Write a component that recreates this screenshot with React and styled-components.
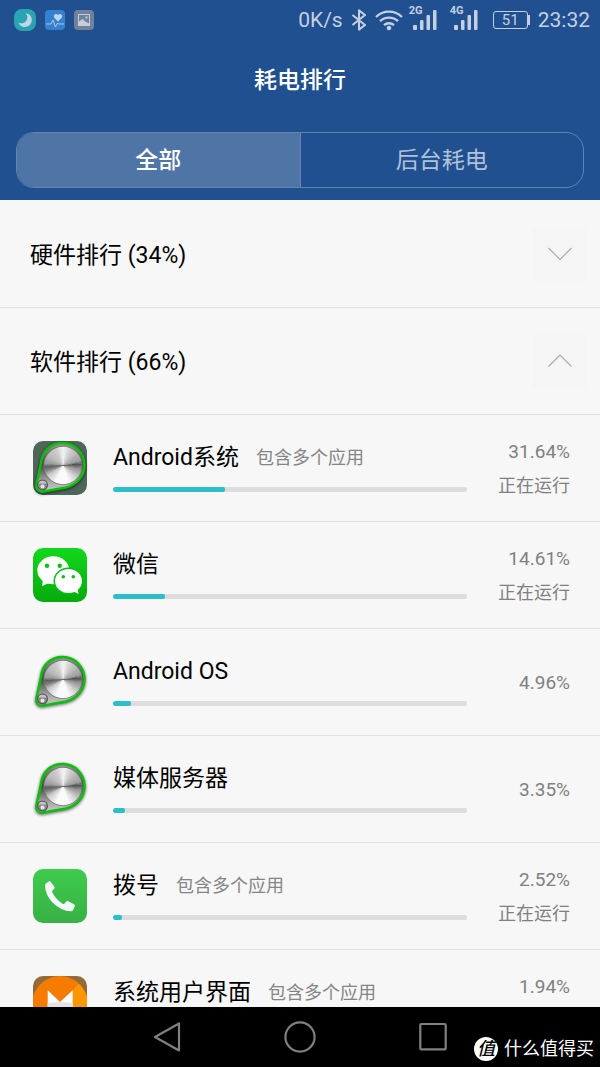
import React, { useState } from 'react';
import styled, { createGlobalStyle } from 'styled-components';

const GlobalStyle = createGlobalStyle`
  * {
    box-sizing: border-box;
  }
  body {
    margin: 0;
    background: #f7f7f7;
    font-family: Roboto, 'Noto Sans CJK SC', sans-serif;
  }
  button {
    font-family: inherit;
    border: none;
    padding: 0;
    background: none;
    cursor: pointer;
  }
`;

const Screen = styled.div`
  display: flex;
  flex-direction: column;
  height: 100vh;
  overflow: hidden;
`;

const Header = styled.header`
  flex: none;
  background: #20508f;
  padding-bottom: 12px;
`;

const StatusBar = styled.div`
  display: flex;
  align-items: center;
  justify-content: space-between;
  height: 40px;
  padding: 0 10px 0 14px;
  color: #c4d0e2;
  font-size: 21px;
  svg {
    display: block;
  }
`;

const StatusGroup = styled.div`
  display: flex;
  align-items: center;
  gap: ${(props) => props.$gap}px;
`;

const Title = styled.h1`
  margin: 0;
  height: 92px;
  padding-top: 21px;
  line-height: 40px;
  font-size: 23px;
  font-weight: 500;
  text-align: center;
  color: #fff;
`;

const Tabs = styled.div`
  display: flex;
  height: 56px;
  margin: 0 16px;
  border: 1px solid #6484b1;
  border-radius: 18px;
  overflow: hidden;
`;

const Tab = styled.button`
  flex: 1;
  && {
    padding-bottom: 4px;
  }
  font-size: 23px;
  font-weight: ${(props) => (props.$active ? 500 : 400)};
  color: ${(props) => (props.$active ? '#fff' : '#b0c1da')};
  background: ${(props) => (props.$active ? '#4f74a6' : 'transparent')};
  & + & {
    border-left: 1px solid #6484b1;
  }
`;

const List = styled.main`
  flex: 1;
  min-height: 0;
  overflow: hidden;
`;

const GroupRow = styled.button`
  display: flex;
  align-items: center;
  justify-content: space-between;
  width: 100%;
  height: 107px;
  && {
    padding: 0 14px 0 30px;
    border-top: 1px solid ${(props) => (props.$first ? 'transparent' : '#e2e2e2')};
  }
  font-size: 23px;
  color: #000;
`;

const GroupName = styled.span`
  padding-bottom: 2px;
`;

const ArrowBox = styled.span`
  display: flex;
  align-items: center;
  justify-content: center;
  width: 53px;
  height: 53px;
  background: #f5f5f5;
`;

const AppRow = styled.div`
  display: flex;
  align-items: center;
  height: 107px;
  padding: 0 30px 0 33px;
  border-top: 1px solid #e2e2e2;
  > svg {
    flex: none;
    overflow: visible;
  }
`;

const AppInfo = styled.div`
  flex: 1;
  margin-left: 26px;
  padding-bottom: 2px;
`;

const AppName = styled.div`
  display: flex;
  align-items: center;
  gap: 17px;
  height: 32px;
  line-height: 32px;
  margin-bottom: 13px;
  font-size: 23px;
  color: #000;
  white-space: nowrap;
`;

const AppNote = styled.span`
  font-size: 18px;
  color: #858585;
`;

const Track = styled.div`
  height: 5px;
  border-radius: 2px;
  background: #dddddd;
  overflow: hidden;
`;

const Fill = styled.div`
  height: 5px;
  border-radius: 2px;
  background: #2abfc9;
`;

const AppUsage = styled.div`
  width: 103px;
  padding-top: 2px;
  line-height: 34px;
  text-align: right;
  color: #808080;
`;

const AppPercent = styled.div`
  font-size: 19px;
`;

const AppStatus = styled.div`
  min-height: 34px;
  font-size: 18px;
`;

const NavBar = styled.nav`
  position: relative;
  flex: none;
  display: flex;
  align-items: center;
  justify-content: center;
  gap: 103px;
  height: 60px;
  background: #000;
  svg {
    display: block;
  }
`;

const Watermark = styled.div`
  position: absolute;
  right: 6px;
  bottom: 5px;
  display: flex;
  align-items: center;
  gap: 6px;
  line-height: 26px;
  font-size: 18px;
  color: #fff;
`;

const WatermarkBadge = styled.span`
  width: 24px;
  height: 24px;
  border-radius: 50%;
  background: #fff;
  color: #000;
  line-height: 23px;
  font-size: 18px;
  font-weight: 500;
  font-style: italic;
  text-align: center;
`;

const MoonIcon = () => (
  <svg width='22' height='22' viewBox='0 0 22 22'>
    <rect width='22' height='22' rx='8' fill='#2aa3b3' />
    <path
      d='M11.500 4A7 7 0 1 1 4.300 13.500A6 6 0 0 0 11.500 4z'
      fill='#c3d5e3'
    />
  </svg>
);

const HealthIcon = () => (
  <svg width='20' height='20' viewBox='0 0 20 20'>
    <rect width='20' height='20' rx='4' fill='#3580cf' />
    <path
      d='M13 11.500L9.500 8C7.500 5 11 2.500 13 5c2-2.500 5.500 0 3.500 3z'
      fill='#c3d5e8'
    />
    <path
      d='M1 14h5l2-4 2.500 7 2-4 1 1H19'
      fill='none'
      stroke='#a9c6e6'
      strokeWidth='1'
    />
  </svg>
);

const PictureIcon = () => (
  <svg width='20' height='20' viewBox='0 0 20 20'>
    <rect width='20' height='20' rx='4' fill='#70819b' />
    <rect x='4.500' y='4.500' width='11' height='11' fill='none' stroke='#c3cddb' />
    <path d='M5 15v-3.500l3.500-2.500 3 2.500 3.500 2V15z' fill='#c3cddb' />
    <rect x='11.500' y='6.500' width='2' height='2' fill='#c3cddb' />
  </svg>
);

const BluetoothIcon = () => (
  <svg width='16' height='22' viewBox='0 0 16 22'>
    <path
      d='M1.500 6l12.500 10-6 4.700V1.300l6 4.700L1.500 16'
      fill='none'
      stroke='#c4d0e2'
      strokeWidth='2.100'
      strokeLinejoin='round'
    />
  </svg>
);

const WifiIcon = () => (
  <svg width='28' height='22' viewBox='0 0 28 22'>
    <g fill='none' stroke='#c4d0e2' strokeWidth='2.400'>
      <path d='M1 8a18.500 18.500 0 0 1 26 0' />
      <path d='M5 12.200a13 13 0 0 1 18 0' />
      <path d='M9 16.200a7.500 7.500 0 0 1 10 0' />
    </g>
    <circle cx='14' cy='19' r='2.300' fill='#c4d0e2' />
  </svg>
);

const Signal = styled.div`
  position: relative;
  width: 27px;
  height: 28px;
  margin-right: 6px;
`;

const SignalLabel = styled.span`
  position: absolute;
  left: -2px;
  top: 0;
  line-height: 10px;
  font-size: 11px;
  font-weight: 700;
`;

const SignalIcon = ({ label }) => (
  <Signal>
    <SignalLabel>{label}</SignalLabel>
    <svg width='27' height='26' viewBox='0 0 27 26'>
      <g fill='#c4d0e2'>
        <rect x='2' y='19' width='4' height='5' rx='1' />
        <rect x='9' y='14' width='3.500' height='10' rx='1' />
        <rect x='15.500' y='9' width='3.500' height='15' rx='1' />
        <rect x='22' y='4' width='3.500' height='20' rx='1' />
      </g>
    </svg>
  </Signal>
);

const Battery = styled.div`
  position: relative;
  width: 35px;
  height: 18px;
  margin-right: 2px;
  border: 1px solid #c4d0e2;
  border-radius: 3px;
  line-height: 16px;
  font-size: 15px;
  text-align: center;
  &::after {
    content: '';
    position: absolute;
    right: -3px;
    top: 3px;
    width: 2px;
    height: 10px;
    background: #c4d0e2;
  }
`;

const ArrowIcon = ({ up }) => (
  <svg width='24' height='14' viewBox='0 0 24 14'>
    <path
      d={up ? 'M0.500 12.500L12 1l11.500 11.500' : 'M0.500 1L12 12.500 23.500 1'}
      fill='none'
      stroke='#a8a8a8'
      strokeWidth='1.100'
    />
  </svg>
);

// brushed metal: angle in degrees (clockwise from top) and gray level
const METAL = [
  [0, 245],
  [18, 215],
  [50, 180],
  [72, 160],
  [84, 85],
  [100, 150],
  [135, 215],
  [160, 250],
  [200, 250],
  [235, 200],
  [252, 130],
  [264, 95],
  [276, 155],
  [300, 185],
  [335, 205],
  [360, 245],
];

const metalAt = (deg) => {
  const i = METAL.findIndex(([a]) => a > deg);
  const [a0, v0] = METAL[i - 1];
  const [a1, v1] = METAL[i];
  return Math.round(v0 + ((v1 - v0) * (deg - a0)) / (a1 - a0));
};

const Metal = ({ cx, cy, r }) => {
  const step = 4;
  const point = (deg) => {
    const t = (deg * Math.PI) / 180;
    return `${cx + r * Math.sin(t)} ${cy - r * Math.cos(t)}`;
  };
  return Array.from({ length: 360 / step }, (_, i) => {
    const v = metalAt(i * step);
    return (
      <path
        key={i}
        d={`M${cx} ${cy}L${point(i * step)}L${point((i + 1) * step + 3)}z`}
        fill={`rgb(${v},${v},${v})`}
      />
    );
  });
};

const BELT =
  'M8 22C9 10 18 2 29.500 2C42 2 51.500 12 51.500 24C51.500 35 44 43.500 33 46.500L10.500 50.500C5.500 51.500 2.500 48 3.500 43z';

const KnobIcon = ({ tile }) => (
  <svg width='54' height='54' viewBox='0 0 54 54'>
    <defs>
      <linearGradient id='plate' x1='0' y1='0' x2='0' y2='1'>
        <stop offset='0' stopColor='#999' />
        <stop offset='0.450' stopColor='#444' />
        <stop offset='0.800' stopColor='#aaa' />
        <stop offset='1' stopColor='#ccc' />
      </linearGradient>
      <filter id='knobShadow' x='-20%' y='-20%' width='140%' height='140%'>
        <feGaussianBlur stdDeviation='1.500' />
      </filter>
      <filter id='soften' colorInterpolationFilters='sRGB'>
        <feGaussianBlur stdDeviation='0.700' />
      </filter>
      <clipPath id='face'>
        <circle cx='30' cy='24.500' r='18.800' />
        <circle cx='9.500' cy='44' r='4.500' />
      </clipPath>
    </defs>
    {tile && <rect width='54' height='54' rx='10' fill='#50665b' />}
    <path
      d={BELT}
      transform='translate(0 1)'
      stroke='#000'
      strokeWidth='3'
      opacity='0.550'
      filter='url(#knobShadow)'
    />
    <path d={BELT} fill='url(#plate)' stroke='#06c206' strokeWidth='2.400' />
    <circle cx='30' cy='24.500' r='19.600' fill='#777' />
    <circle cx='9.500' cy='44' r='5.500' fill='#555' />
    <g clipPath='url(#face)'>
      <g filter='url(#soften)' shapeRendering='crispEdges'>
        <Metal cx={30} cy={24.5} r={21} />
      </g>
      <circle cx='9.500' cy='44' r='4.500' fill='#8a8a8a' />
      <path d='M5 42.500h9l-1-3H6z' fill='#c4c4c4' />
      <circle cx='9.500' cy='45.500' r='2' fill='#e6e6e6' />
    </g>
  </svg>
);

const WechatIcon = () => (
  <svg width='54' height='54' viewBox='0 0 54 54'>
    <defs>
      <linearGradient id='wechat' x1='0' y1='0' x2='0' y2='1'>
        <stop offset='0' stopColor='#12d81c' />
        <stop offset='1' stopColor='#05ab0c' />
      </linearGradient>
    </defs>
    <rect width='54' height='54' rx='10' fill='url(#wechat)' />
    <g fill='#fff'>
      <ellipse cx='20.300' cy='22.300' rx='16' ry='14' />
      <path d='M10 31l-1 7 7-3z' />
    </g>
    <ellipse cx='35.500' cy='33' rx='15' ry='13.500' fill='#09bc12' />
    <g fill='#fff'>
      <ellipse cx='35.500' cy='33' rx='13.500' ry='12' />
      <path d='M40 43l5.500 3-1-6z' />
    </g>
    <g fill='#09bf12'>
      <circle cx='14' cy='17.700' r='2.200' />
      <circle cx='26.700' cy='17.700' r='2.200' />
      <circle cx='30.300' cy='28.700' r='1.800' />
      <circle cx='40.300' cy='28.700' r='1.800' />
    </g>
  </svg>
);

const PhoneIcon = () => (
  <svg width='54' height='54' viewBox='0 0 54 54'>
    <defs>
      <linearGradient id='phone' x1='0' y1='0' x2='0' y2='1'>
        <stop offset='0' stopColor='#3fcb4d' />
        <stop offset='1' stopColor='#38b045' />
      </linearGradient>
    </defs>
    <rect width='54' height='54' rx='10' fill='url(#phone)' />
    <path
      d='M13 14.500L16 12.300Q17 11.800 17.700 12.700L21.500 18Q22 19 21.200 19.800L19.500 21.500Q18.800 22.500 19.300 23.500Q23 30.500 29.500 34.700Q30.700 35.400 31.500 34.500L33 32.700Q34 31.800 35.200 32.300L41 35.300Q42.200 36 41.800 37.200L40 41.200Q39.500 42.300 38 42.300Q28 42 19.500 33.500Q12.500 26 12 17Q11.900 15.300 13 14.500z'
      fill='#f3f7fc'
    />
  </svg>
);

const MarshmallowIcon = () => (
  <svg width='54' height='54' viewBox='0 0 54 54'>
    <defs>
      <clipPath id='tile'>
        <rect width='54' height='54' rx='10' />
      </clipPath>
    </defs>
    <g clipPath='url(#tile)'>
      <rect width='54' height='54' fill='#936a3a' />
      <circle cx='27' cy='28' r='28' fill='#f57c00' />
      <path d='M40 14l6-6Q55 17 55 30V54H40z' fill='#ff9800' />
      <path d='M14.700 14.300L27 26l12.700-11.700V42H14.700z' fill='#fff' />
      <path d='M14.700 27l12.300-1 12.700 1V42h-25z' fill='#e4e4e4' />
    </g>
  </svg>
);

const BackIcon = () => (
  <svg width='28' height='32' viewBox='0 0 28 32'>
    <path
      d='M26 2.500v27L2 16z'
      fill='none'
      stroke='#808080'
      strokeWidth='2.200'
      strokeLinejoin='round'
    />
  </svg>
);

const HomeIcon = () => (
  <svg width='32' height='32' viewBox='0 0 32 32'>
    <circle cx='16' cy='16' r='14.600' fill='none' stroke='#808080' strokeWidth='2.200' />
  </svg>
);

const RecentIcon = () => (
  <svg width='28' height='32' viewBox='0 0 28 32'>
    <rect
      x='1.300'
      y='3'
      width='25.400'
      height='25.400'
      rx='1'
      fill='none'
      stroke='#808080'
      strokeWidth='2.200'
    />
  </svg>
);

const apps = [
  { name: 'Android系统', note: '包含多个应用', percent: 31.64, status: '正在运行', icon: <KnobIcon tile /> },
  { name: '微信', percent: 14.61, status: '正在运行', icon: <WechatIcon /> },
  { name: 'Android OS', percent: 4.96, icon: <KnobIcon /> },
  { name: '媒体服务器', percent: 3.35, icon: <KnobIcon /> },
  { name: '拨号', note: '包含多个应用', percent: 2.52, status: '正在运行', icon: <PhoneIcon /> },
  { name: '系统用户界面', note: '包含多个应用', percent: 1.94, status: '', icon: <MarshmallowIcon /> },
];

const App = () => {
  const [tab, setTab] = useState('全部');

  return (
    <Screen>
      <GlobalStyle />
      <Header>
        <StatusBar>
          <StatusGroup $gap={9}>
            <MoonIcon />
            <HealthIcon />
            <PictureIcon />
          </StatusGroup>
          <StatusGroup $gap={8}>
            <span>0K/s</span>
            <BluetoothIcon />
            <WifiIcon />
            <SignalIcon label='2G' />
            <SignalIcon label='4G' />
            <Battery>51</Battery>
            <span>23:32</span>
          </StatusGroup>
        </StatusBar>
        <Title>耗电排行</Title>
        <Tabs>
          {['全部', '后台耗电'].map((name) => (
            <Tab key={name} $active={tab === name} onClick={() => setTab(name)}>
              {name}
            </Tab>
          ))}
        </Tabs>
      </Header>
      <List>
        <GroupRow $first>
          <GroupName>硬件排行 (34%)</GroupName>
          <ArrowBox>
            <ArrowIcon />
          </ArrowBox>
        </GroupRow>
        <GroupRow>
          <GroupName>软件排行 (66%)</GroupName>
          <ArrowBox>
            <ArrowIcon up />
          </ArrowBox>
        </GroupRow>
        {apps.map((app) => (
          <AppRow key={app.name}>
            {app.icon}
            <AppInfo>
              <AppName>
                {app.name}
                {app.note && <AppNote>{app.note}</AppNote>}
              </AppName>
              <Track>
                <Fill style={{ width: `${app.percent}%` }} />
              </Track>
            </AppInfo>
            <AppUsage>
              <AppPercent>{app.percent}%</AppPercent>
              {app.status !== undefined && <AppStatus>{app.status}</AppStatus>}
            </AppUsage>
          </AppRow>
        ))}
      </List>
      <NavBar>
        <button aria-label='返回'>
          <BackIcon />
        </button>
        <button aria-label='主页'>
          <HomeIcon />
        </button>
        <button aria-label='最近'>
          <RecentIcon />
        </button>
        <Watermark>
          <WatermarkBadge>值</WatermarkBadge>
          什么值得买
        </Watermark>
      </NavBar>
    </Screen>
  );
};

export default App;
